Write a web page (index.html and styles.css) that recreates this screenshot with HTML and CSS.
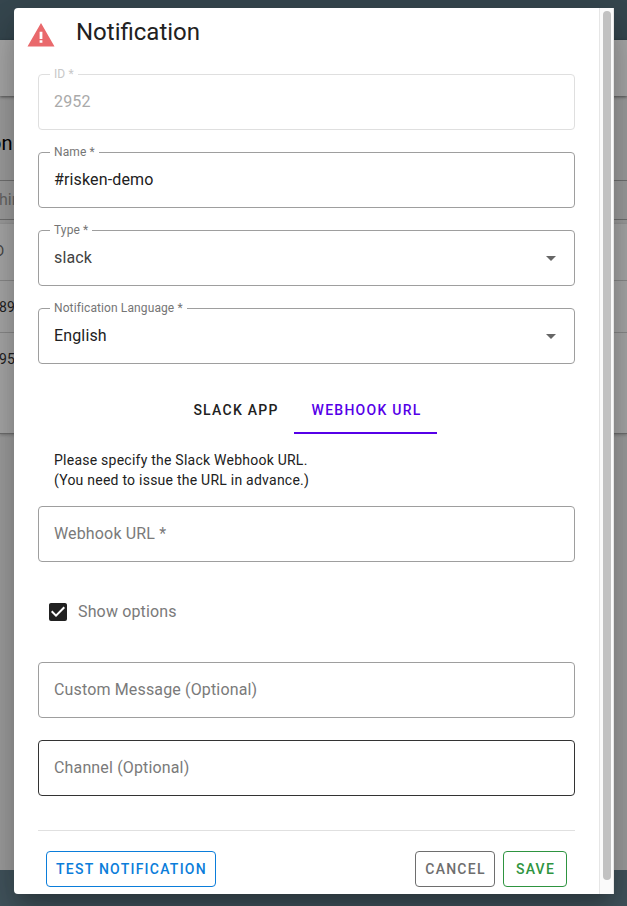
FILE: index.html
```html
<!DOCTYPE html>
<html lang="en">
<head>
<meta charset="utf-8">
<title>Notification</title>
<link rel="stylesheet" href="styles.css">
</head>
<body>
<div class="page">
  <div class="app-bar"></div>
  <div class="toolbar"></div>
  <div class="content">
    <div class="page-title"><span>on</span></div>
    <div class="search"><span>hin</span></div>
    <div class="table">
      <div class="row head"><span>D</span></div>
      <div class="row"><span>89</span></div>
      <div class="row last"><span>95</span></div>
    </div>
  </div>
  <div class="footer"></div>
</div>
<div class="dialog">
  <div class="body">
    <header class="title">
      <svg width="28" height="24" viewBox="0 0 28 24"><path fill="#e9696c" fill-rule="evenodd" d="M14 0 27.5 23.5H.5ZM12.6 8.7V16h2.8V8.7ZM12.6 17.2v2.6h2.8v-2.6Z"/></svg>
      <h1>Notification</h1>
    </header>
    <div class="form">
      <fieldset class="field disabled"><legend>ID *</legend><span>2952</span></fieldset>
      <fieldset class="field"><legend>Name *</legend><span>#risken-demo</span></fieldset>
      <fieldset class="field select readonly"><legend>Type *</legend><span>slack</span><i class="caret"></i></fieldset>
      <fieldset class="field select"><legend>Notification Language *</legend><span>English</span><i class="caret"></i></fieldset>
      <div class="tabs"><div class="tab"><span>SLACK APP</span></div><div class="tab active"><span>WEBHOOK URL</span></div></div>
      <p class="hint">Please specify the Slack Webhook URL.<br>(You need to issue the URL in advance.)</p>
      <div class="field empty url"><span>Webhook URL *</span></div>
      <div class="check">
        <svg width="24" height="24" viewBox="0 0 24 24"><path fill="#212121" d="M10 17 5 12l1.41-1.42L10 14.17l7.59-7.59L19 8m0-5H5c-1.11 0-2 .89-2 2v14a2 2 0 0 0 2 2h14a2 2 0 0 0 2-2V5c0-1.11-.9-2-2-2Z"/></svg>
        <span>Show options</span>
      </div>
      <div class="field empty"><span>Custom Message (Optional)</span></div>
      <div class="field empty hovered"><span>Channel (Optional)</span></div>
      <div class="actions">
        <button class="test">TEST NOTIFICATION</button>
        <button class="cancel">CANCEL</button>
        <button class="save">SAVE</button>
      </div>
    </div>
  </div>
  <div class="scrollbar"><div class="thumb"></div></div>
</div>
</body>
</html>
```
FILE: styles.css
```css
* { box-sizing: border-box; }
body { margin: 0; width: 627px; height: 906px; overflow: hidden; font-family: Roboto, sans-serif; color: #212121; }
.page { position: absolute; inset: 0; isolation: isolate; display: flex; flex-direction: column; background: #9f9f9f; }
.app-bar { height: 40px; background: #36474f; }
.toolbar { height: 56px; background: #a9a9a9; box-shadow: 0 1px 3px rgba(0,0,0,.5); z-index: 1; }
.content { flex: 1; overflow: hidden; }
.content span { display: block; white-space: nowrap; }
.page-title { height: 84px; padding-top: 35px; font-size: 20px; line-height: 24px; font-weight: 400; color: #000; }
.page-title span { margin-left: -10px; }
.search { height: 40px; border: solid #727272; border-width: 1px 0; font-size: 16px; line-height: 37px; color: #666; }
.search span { margin-left: -1px; }
.table { height: 210px; margin-top: 4px; background: #a9a9a9; border-bottom: 1px solid #707070; box-shadow: 0 1px 3px rgba(0,0,0,.25); }
.row { height: 52px; border-bottom: 1px solid #8b8b8b; font-size: 14px; line-height: 52px; }
.row.head { height: 57px; line-height: 55px; color: #454545; }
.row.head span { margin-left: -5px; }
.row span { margin-left: -1px; letter-spacing: .2px; }
.row.last { border: 0; }
.footer { height: 36px; background: #42545d; }
.dialog { position: absolute; left: 14px; top: 8px; width: 600px; height: 886px; display: flex; background: #fff; border-radius: 4px 0 0 4px; box-shadow: 0 11px 15px -7px rgba(0,0,0,.2), 0 24px 38px 3px rgba(0,0,0,.14), 0 9px 46px 8px rgba(0,0,0,.12); }
.body { width: 585px; }
.title { display: flex; height: 66px; padding-left: 13px; }
.title svg { margin-top: 15px; }
h1 { margin: 8px 0 0 21px; font-size: 24px; line-height: 32px; font-weight: 400; }
.form { padding: 0 24px; }
.field { position: relative; display: flex; align-items: center; width: 537px; height: 56px; margin: 0 0 22px; padding: 0 15px 2px; border: 1px solid #9e9e9e; border-radius: 4px; font-size: 16px; letter-spacing: .15px; }
fieldset.field { height: 62px; display: block; margin: -6px 0 22px; padding: 0 11px; }
legend { padding: 0 4px; height: 12px; line-height: 12px; font-size: 12px; letter-spacing: .11px; color: #757575; }
fieldset.field > span { display: block; padding: 10px 4px 0; line-height: 24px; }
.disabled { border-color: #dfdfdf; }
.disabled legend { color: #c8c8c8; }
.disabled span { color: #aaa; }
.readonly span { color: #424242; }
.caret { position: absolute; right: 18px; top: 20px; border: 5px solid transparent; border-top-color: #666; border-bottom: 0; }
.empty { color: #7a7a7a; }
.hovered { border-color: #333; }
.tabs { display: flex; justify-content: center; height: 48px; }
.tab { display: flex; align-items: center; padding: 0 15px 0 17px; font-size: 14px; font-weight: 500; letter-spacing: 1.25px; }
.tab.active { width: 143px; padding: 2px 0 0 18px; color: #5600e8; border-bottom: 2px solid #5600e8; }
.hint { margin: 16px 16px 16px; font-size: 14px; line-height: 20px; letter-spacing: .24px; }
.check { display: flex; align-items: center; height: 56px; margin: 22px 0; padding-left: 8px; gap: 8px; color: #7a7a7a; font-size: 16px; letter-spacing: .15px; }
.check span { padding-bottom: 2px; }
.actions { display: flex; align-items: flex-start; gap: 8px; height: 64px; margin-top: 34px; padding: 20px 8px 0; border-top: 1px solid #e0e0e0; }
button { height: 36px; padding: 0 0 0 1px; border: 1px solid; border-radius: 4px; background: none; font: 500 14px Roboto, sans-serif; letter-spacing: 1.25px; }
.test { width: 170px; margin-right: auto; color: #0b7dda; }
.cancel { width: 80px; color: #6e6e6e; }
.save { width: 64px; color: #2e9440; }
.scrollbar { width: 15px; padding: 3px 3px 0; border: solid #e6e6e6; border-width: 0 1px; background: #fafafa; }
.thumb { width: 8px; height: 869px; border-radius: 4px; background: #c1c1c1; }
```
